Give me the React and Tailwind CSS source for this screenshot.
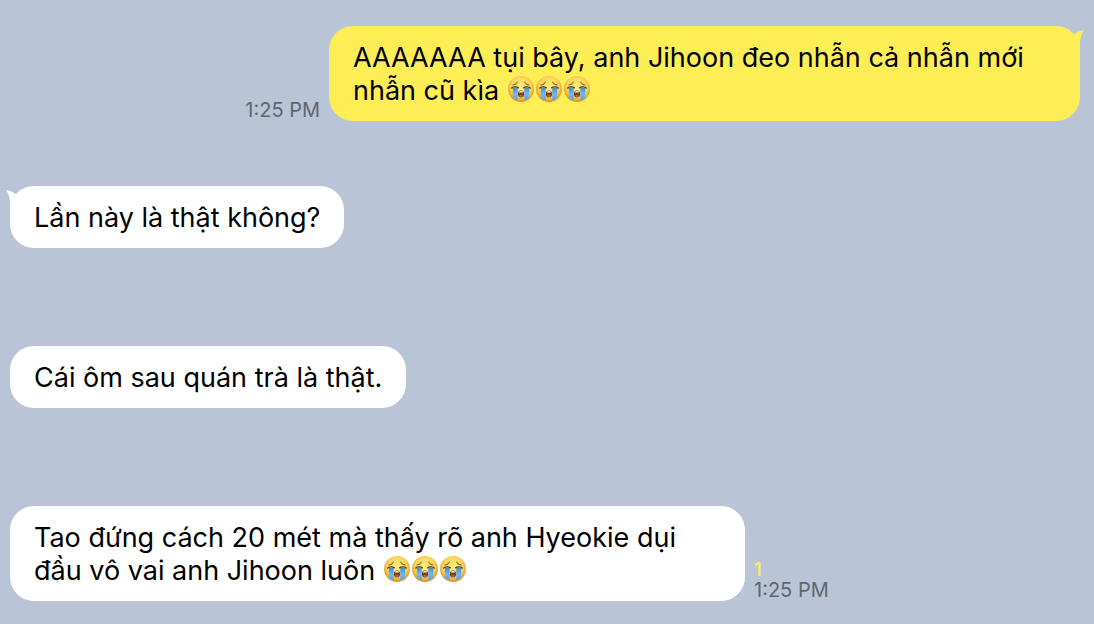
const messages = [
  {
    id: 1,
    mine: true,
    tail: true,
    text: "AAAAAAA tụi bây, anh Jihoon đeo nhẫn cả nhẫn mới nhẫn cũ kìa",
    cries: 3,
    time: "1:25 PM",
    width: "max-w-[751px]",
  },
  { id: 2, tail: true, text: "Lần này là thật không?" },
  { id: 3, text: "Cái ôm sau quán trà là thật." },
  {
    id: 4,
    text: "Tao đứng cách 20 mét mà thấy rõ anh Hyeokie dụi đầu vô vai anh Jihoon luôn",
    cries: 3,
    time: "1:25 PM",
    unread: 1,
    width: "max-w-[735px]",
  },
];

function CryDefs() {
  return (
    <svg className="absolute h-0 w-0" aria-hidden="true">
      <defs>
        <radialGradient id="face" cx="0.5" cy="0.42" r="0.58">
          <stop offset="0" stopColor="#ffee86" />
          <stop offset="0.65" stopColor="#fad558" />
          <stop offset="1" stopColor="#d98f2b" />
        </radialGradient>
        <linearGradient id="tear" x1="0" y1="0" x2="0" y2="1">
          <stop offset="0" stopColor="#3f8fd6" />
          <stop offset="0.5" stopColor="#73b8ee" />
          <stop offset="1" stopColor="#5a9fe0" />
        </linearGradient>
      </defs>
    </svg>
  );
}

function CryEmoji() {
  return (
    <svg
      viewBox="0 0 28 28"
      className="inline-block h-7 w-7 align-[-3px]"
      role="img"
      aria-label="😭"
    >
      <circle cx="14" cy="14" r="13" fill="url(#face)" />
      <path d="M5.8 13h4.900v12.400c-2-.6-3.800-1.700-4.900-3.200z" fill="url(#tear)" />
      <path d="M22.200 13h-4.900v12.400c2-.6 3.800-1.700 4.900-3.200z" fill="url(#tear)" />
      <path
        d="M4.800 13c1.300-1.400 4.600-1.600 6.500-.2M23.200 13c-1.300-1.400-4.600-1.600-6.500-.2"
        fill="none"
        stroke="#5c3a17"
        strokeWidth="1.400"
        strokeLinecap="round"
      />
      <path
        d="M5.800 10c1.900-.2 3.600-1.200 4.500-2.800M22.200 10c-1.900-.2-3.600-1.200-4.500-2.800"
        fill="none"
        stroke="#a06a20"
        strokeWidth="1.200"
        strokeLinecap="round"
      />
      <path
        d="M14 15.400c2 0 3.200 1.700 3.200 3.900 0 2-1.200 3.100-3.200 3.100s-3.200-1.100-3.200-3.100c0-2.200 1.200-3.900 3.200-3.900z"
        fill="#7a4220"
      />
      <path d="M12 17.500c.3-1 1.100-1.400 2-1.400s1.700.4 2 1.400z" fill="#fff" />
      <path d="M12 21.100c.5-1.300 3.500-1.300 4 0-.5.500-1.100.7-2 .7s-1.500-.2-2-.7z" fill="#c9765c" />
    </svg>
  );
}

function Tail({ mine }) {
  return (
    <svg
      viewBox="0 0 14 20"
      aria-hidden="true"
      className={
        mine
          ? "absolute top-1 -right-1 h-5 w-[14px] text-[#fdee55]"
          : "absolute top-1 -left-1 h-5 w-[14px] -scale-x-100 text-white"
      }
    >
      <path d="M0 6C5 4 8 .8 14 0C11.500 3.500 10 8 10 14V20H0z" fill="currentColor" />
    </svg>
  );
}

function Message({ mine, tail, text, cries = 0, time, unread, width = "" }) {
  return (
    <li className={`flex min-h-40 items-start ${mine ? "justify-end" : ""}`}>
      <div className={`flex items-end gap-[9px] ${mine ? "flex-row-reverse" : ""}`}>
        <div
          className={`relative rounded-3xl px-6 pt-[15px] pb-[14px] text-[27px] leading-[33px] text-black ${
            mine ? "bg-[#fdee55]" : "bg-white"
          } ${width}`}
        >
          {tail && <Tail mine={mine} />}
          <p className="relative">
            {text}{" "}
            {cries > 0 && (
              <span className="whitespace-nowrap">
                {Array.from({ length: cries }, (_, i) => (
                  <CryEmoji key={i} />
                ))}
              </span>
            )}
          </p>
        </div>
        {time && (
          <div className="shrink-0 pb-px text-xl leading-5 text-[#5f676e]">
            {unread && <p className="text-lg leading-5 font-semibold text-[#fdee55]">{unread}</p>}
            <time className="block">{time}</time>
          </div>
        )}
      </div>
    </li>
  );
}

export default function App() {
  return (
    <main className="min-h-screen bg-[#b9c5d6] pt-[26px] pr-[14px] pl-[10px] font-['Inter','Noto_Sans',sans-serif]">
      <CryDefs />
      <ul className="[&>li:last-child]:min-h-0 [&>li:last-child]:pb-[22px]">
        {messages.map((message) => (
          <Message key={message.id} {...message} />
        ))}
      </ul>
    </main>
  );
}
